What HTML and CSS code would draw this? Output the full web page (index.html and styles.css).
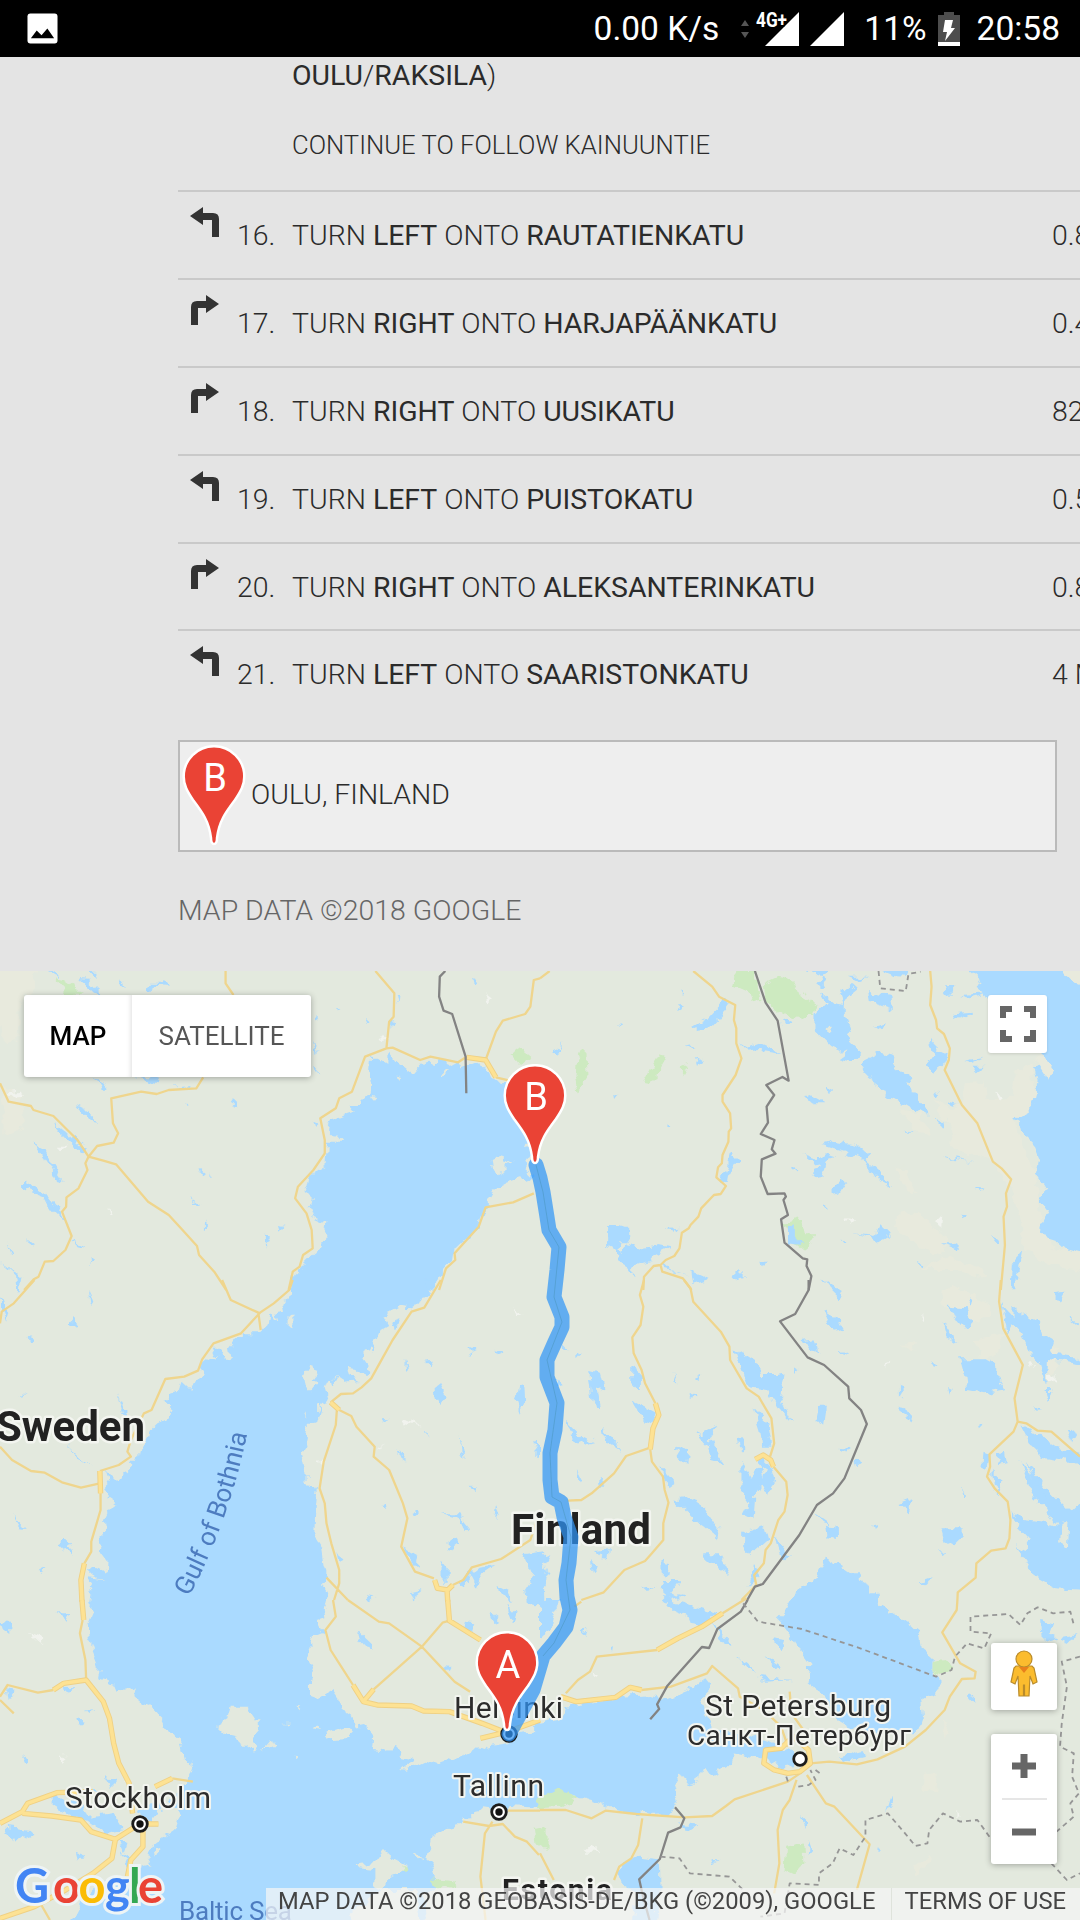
FILE: index.html
```html
<!DOCTYPE html>
<html lang="en">
<head>
<meta charset="utf-8">
<title>Directions to Oulu</title>
<link rel="stylesheet" href="styles.css">
</head>
<body>
<svg class="defs" width="0" height="0" aria-hidden="true">
  <symbol id="left" viewBox="0 0 30 30"><path d="M0 9 13 0v6h10q6 0 6 6v18h-7V13h-9v5z"/></symbol>
  <symbol id="right" viewBox="0 0 30 30"><path d="M29 9 16 0v6H7q-6 0-6 6v18h7V13h8v5z"/></symbol>
  <symbol id="pin" viewBox="-32 0 64 102"><path class="pin-body" d="M0 99C-2.500 99-3 96-3 93C-5 76-12 67-21 55C-27 46-30.300 40-30.300 31.500A30.300 30.300 0 0 1 30.300 31.500C30.300 40 27 46 21 55C12 67 5 76 3 93C3 96 2.500 99 0 99Z"/></symbol>
</svg>

<header class="status">
  <svg class="picture" viewBox="0 0 32 32"><rect x=".5" y=".5" width="31" height="31" rx="3" fill="#fff"/><path d="M4 26 10 18l5 5 6-7 7 10z"/></svg>
  <span class="speed">0.00 K/s</span>
  <svg class="updown" viewBox="0 0 8 18"><path d="M4 0 8 6H0zM4 18 0 12h8z" fill="#555"/></svg>
  <svg class="signal wide" viewBox="0 0 43 34"><path d="M43 0V34H9z" fill="#fff"/><text class="net" x="0" y="15" textLength="31" lengthAdjust="spacingAndGlyphs">4G+</text></svg>
  <svg class="signal" viewBox="0 0 34 34"><path d="M34 0V34H0z" fill="#fff"/></svg>
  <span class="percent">11%</span>
  <svg class="battery" viewBox="0 0 22 34"><path d="M0 3h6V0h10v3h6v27H0z" fill="#4d4d4d"/><path d="M0 30h22v4H0zM7 8h8l-2 8h4L7 29l2-9H5z" fill="#fff"/></svg>
  <span class="clock">20:58</span>
</header>

<main class="directions">
  <div class="continued">
    <p class="dest"><b>OULU</b>/<b>RAKSILA</b>)</p>
    <p class="follow">CONTINUE TO FOLLOW KAINUUNTIE</p>
  </div>
  <ol class="steps">
    <li><svg><use href="#left"/></svg><span>16.</span><p>TURN <b>LEFT</b> ONTO <b>RAUTATIENKATU</b></p><span>0.8 KM</span></li>
    <li><svg><use href="#right"/></svg><span>17.</span><p>TURN <b>RIGHT</b> ONTO <b>HARJAPÄÄNKATU</b></p><span>0.4 KM</span></li>
    <li><svg><use href="#right"/></svg><span>18.</span><p>TURN <b>RIGHT</b> ONTO <b>UUSIKATU</b></p><span>82 M</span></li>
    <li><svg><use href="#left"/></svg><span>19.</span><p>TURN <b>LEFT</b> ONTO <b>PUISTOKATU</b></p><span>0.5 KM</span></li>
    <li><svg><use href="#right"/></svg><span>20.</span><p>TURN <b>RIGHT</b> ONTO <b>ALEKSANTERINKATU</b></p><span>0.8 KM</span></li>
    <li><svg><use href="#left"/></svg><span>21.</span><p>TURN <b>LEFT</b> ONTO <b>SAARISTONKATU</b></p><span>4 M</span></li>
  </ol>
  <div class="arrival">
    <svg class="arrival-pin" viewBox="-32 0 64 102"><use href="#pin" x="-32" y="0" width="64" height="102"/><text class="pin-letter" x="1" y="46">B</text></svg>
    <span>OULU, FINLAND</span>
  </div>
  <p class="credit">MAP DATA ©2018 GOOGLE</p>
</main>

<section class="map">
<svg class="canvas" viewBox="0 971 1080 949">
  <defs>
    <filter id="coast" filterUnits="userSpaceOnUse" x="-20" y="950" width="1120" height="990" color-interpolation-filters="sRGB">
      <feTurbulence type="fractalNoise" baseFrequency=".11" numOctaves="2" seed="4"/>
      <feDisplacementMap in="SourceGraphic" scale="11" xChannelSelector="R" yChannelSelector="G"/>
    </filter>
  </defs>
  <rect x="0" y="960" width="1080" height="970" fill="#e3e9de"/>
  <g filter="url(#coast)">
    <!-- north west -->
    <g transform="translate(0 960) scale(.34439 .33333)">
      <path class="sand" d="M-20 20H110L90 100 60 110 50 240 20 250-20 150zM10 380l50 30 10 90-60 30z"/>
      <path class="park" d="M160 55 185 60 230 90 240 104 200 104zM1485 285 1510 265 1540 290 1510 315z"/>
      <path class="water" d="M845 1010 858 950 880 915 912 880 938 860 954 832 940 800 942 785 905 768 898 745 908 715 878 692 893 680 900 645 945 615 950 545 990 545 965 515 945 490 1010 462 1030 455 1012 432 1040 432 1070 400 1075 375 1070 345 1075 290 1092 290 1122 312 1122 270 1150 305 1175 325 1200 345 1235 305 1258 318 1285 300 1340 325 1380 308 1410 325 1430 355 1450 370 1480 365 1500 440 1540 520 1525 560 1540 590 1520 625 1545 650 1530 665 1500 655 1470 665 1430 690 1418 710 1420 740 1395 770 1390 800 1355 835 1320 870 1315 900 1285 930 1265 975 1235 1010z"/>
      <path class="water" d="M135 32 175 55 160 32zM230 60 255 62 300 104 270 98zM255 32 280 32 280 55zM345 50 360 60 368 88 355 75zM420 80 435 68 465 68 480 60 487 78 455 75 430 95zM390 352 465 352 455 370zM500 380 555 375 560 388zM220 435 250 450 285 485 260 482zM160 490 190 515 250 570 240 580 200 545 170 515zM100 550 130 565 150 610 185 665 165 660 140 610zM70 660 130 700 160 740 195 795 150 750 120 705 70 685zM0 905 30 930 65 945 60 1000 50 1000 48 950zM205 835 245 870 225 865zM260 890 270 900 262 912zM75 838 98 855 92 865zM775 825 785 845 775 858zM808 798 820 800 812 812zM575 625 592 638 582 643zM555 715 585 735 568 732zM670 435 680 420 687 442zM915 165 928 178 918 182zM975 140 988 152 982 160zM1060 172 1075 185 1068 190zM1155 100 1163 100 1160 130zM905 235 925 280 912 270zM912 320 930 340 915 335zM1370 50 1390 60 1380 70zM270 340 310 385 300 390zM535 430 545 435 540 440zM595 780 602 800 595 808zM610 640 618 658 612 655zM15 840 40 890 32 890zM910 485 925 492 915 500zM1130 180 1145 185 1135 205z"/>
      <path class="land" d="M1425 600 1445 590 1492 605 1465 608 1465 630 1445 643 1428 630zM1285 330 1298 335 1290 348zM1075 405 1090 408 1080 420zM1155 340 1170 345 1160 360z"/>
      <path class="snow" d="M1400 95 1425 115 1412 130zM20 400 55 395 60 408 30 410zM165 560 193 560 178 580zM310 735 325 770 318 770zM1100 225 1125 235 1110 240z"/>
    </g>
    <!-- north east -->
    <g transform="translate(540 960) scale(.34439 .33333)">
      <path class="sand" d="M1230 370 1290 365 1300 420 1370 410 1375 340 1430 310 1440 440 1380 480 1400 560 1440 640 1455 800 1490 860 1580 880 1580 940 1510 920 1450 900 1400 860 1400 790 1370 690 1310 600 1190 560 1200 520 1140 420 1200 450 1230 430zM1040 450 1100 460 1140 525 1100 520zM1040 760 1090 755 1180 830 1170 890 1100 860 1030 800zM1100 930 1180 890 1300 940 1290 950 1200 930zM1035 620 1060 625 1090 700 1060 690z"/>
      <path class="park" d="M570 33 625 33 640 120 612 125 605 95 560 75zM650 70 690 50 730 58 750 100 805 135 795 165 765 165 738 180 700 160 655 125zM120 265 135 280 138 350 110 395 100 350 105 300zM345 285 365 295 325 370 303 365 330 310zM405 320 430 310 415 340zM705 785 760 775 770 820 803 820 770 875 740 850z"/>
      <path class="water" d="M1235 20 1280 60 1265 85 1300 110 1310 130 1440 270 1470 300 1435 325 1445 360 1435 430 1410 458 1380 478 1400 500 1405 525 1430 550 1450 600 1440 640 1470 690 1450 720 1475 755 1450 800 1480 840 1510 850 1530 870 1590 885V20z"/>
      <path class="water" d="M797 165 830 130 812 97 850 130 880 135 870 105 905 75 920 90 885 120 885 170 900 210 895 240 930 275 905 305 870 295 890 280 840 255 797 210zM950 95 1020 110 1025 150 985 135 955 125zM770 28 850 28 820 48zM900 50 950 50 925 62zM805 75 820 52 832 78zM925 310 990 275 1030 285 1025 315 1070 350 1080 395 1120 440 1125 470 1060 430 1010 415 990 380 950 350zM440 205 490 175 540 120 555 125 520 170 495 200 450 210zM577 250 600 265 640 250 705 280 640 270 600 275zM770 415 785 405 830 430 790 430zM820 555 850 545 930 560 960 585 945 600 1000 650 1020 680 970 650 940 600 920 590 880 575 835 560zM765 585 810 600 830 580 860 590 830 600 820 645 785 650 790 630 815 625zM195 795 225 795 240 800 262 800 262 835 250 855 300 865 345 855 380 862 335 885 320 905 270 920 272 945 255 920 230 905 225 870 195 855zM355 905 380 930 430 945 365 930zM440 935 490 960 445 975zM560 945 575 930 595 950 570 958zM555 580 575 600 550 640 545 670 520 655 540 640zM720 800 740 790 740 830 765 855 720 850zM910 820 970 828 985 790 1020 825 980 848 960 832zM1130 235 1160 270 1178 280 1175 310 1140 335 1120 300 1150 290 1140 270zM1195 160 1255 155 1230 170 1200 180zM1170 82 1210 80 1185 105zM1220 105 1300 100 1250 115zM985 28 1070 28 1060 50 1030 48zM1235 300 1285 290 1255 305zM1250 320 1295 320 1265 340zM1170 850 1205 850 1215 870zM1145 475 1180 495 1165 500zM1175 425 1215 435 1200 440zM1145 392 1165 400 1150 412zM1170 590 1260 605 1200 600zM1400 870 1380 985 1367 985 1370 910zM1265 685 1290 680 1280 692zM1215 760 1240 768 1225 775zM1310 825 1340 840 1330 852zM845 690 880 655 885 670 865 705zM735 620 748 630 738 640zM450 290 470 305 460 325zM420 260 445 255 440 265zM370 490 382 498 370 505zM215 405 225 410 218 420zM640 905 652 905 645 925zM400 135 415 145 405 150zM410 88 420 95 415 102zM225 192 232 195 228 205zM970 200 1010 190 1000 212zM700 178 730 190 705 200zM825 735 835 740 832 750zM1095 905 1110 912 1105 925zM865 830 890 850 880 850zM370 805 405 800 395 812zM1060 505 1085 515 1070 515zM830 382 850 392 835 392zM40 270 65 250 45 285z"/>
      <path class="land" d="M835 200 850 200 848 215 838 212zM230 850 250 850 240 875 228 870z"/>
      <path class="sand" d="M1505 20 1590 20V80L1540 60zM1435 290 1460 285 1490 330 1475 360 1450 320z"/>
      <path class="snow" d="M1325 398 1350 408 1335 422zM1150 790 1168 770 1165 800zM885 775 915 780 900 795z"/>
    </g>
    <!-- west -->
    <g transform="translate(0 1280) scale(.34439 .33333)">
      <path class="water" d="M850-20 845 35 820 75 825 95 800 100 805 130 785 100 780 135 755 160 710 160 705 175 680 185 665 205 670 235 650 240 640 220 628 242 600 232 590 240 588 275 570 300 555 330 530 305 525 320 490 345 475 365 500 375 490 400 480 420 460 430 435 455 430 475 410 505 400 520 395 545 375 545 375 575 355 580 345 605 325 585 305 580 315 610 300 625 310 650 338 670 318 685 305 715 308 755 292 765 295 800 290 810 315 845 313 875 270 855 255 870 275 890 300 900 262 895 255 920 270 945 262 985H950L940 970 950 940 938 915 950 890 942 850 935 800 910 760 912 700 920 620 890 615 890 580 882 540 877 520 890 500 885 480 895 435 920 430 935 375 955 370 943 325 950 305 975 288 1000 305 1050 300 1030 270 1060 285 1078 275 1052 235 1070 195 1080 215 1105 150 1130 135 1115 105 1160 80 1190 85 1230 60 1240 10 1237-20z"/>
      <path class="water" d="M50-10 62-10 58 35 50 25zM0 50 18 100 12 125 0 90zM260 30 275 75 265 70zM200 130 215 110 225 140zM80 170 98 178 85 185zM340 345 365 400 355 395zM195 495 265 560 230 535zM165 790 190 775 210 795 195 800 212 830 180 805zM35 705 75 750 60 748zM110 860 132 868 120 875zM1145 120 1160 115 1150 150 1138 140zM1262 325 1278 312 1298 350 1275 378 1265 355zM1508 320 1520 325 1522 370 1512 395 1500 360zM1435 200 1470 212 1450 222zM1360 205 1375 212 1368 225zM1235 245 1260 242 1250 262zM1180 240 1188 260 1182 278zM1150 500 1180 545 1165 535zM1335 470 1350 535 1340 520zM1545 510 1568 480 1568 535zM1170 805 1215 830 1210 860 1195 845zM1275 840 1300 870 1300 905 1285 905 1285 870zM1340 900 1390 860 1435 855 1400 880 1385 920 1370 890 1345 920zM1295 800 1330 775 1335 785 1300 812zM1280 700 1340 700 1345 720 1365 745 1350 760 1335 715zM1440 680 1450 705 1435 715zM1520 820 1580 810 1580 980 1530 970 1525 930 1550 890zM1445 915 1475 930 1490 970 1450 940zM1065 945 1090 950 1075 958zM1190 940 1230 930 1200 955zM980 820 1005 840 985 845zM1200 690 1220 690 1205 702zM1110 670 1120 675 1113 685zM1370 620 1385 622 1375 630zM1235 445 1250 468 1240 460zM1110 415 1135 414 1115 422zM60 342 78 345 65 350z"/>
      <path class="land" d="M880 290 900 260 925 270 905 300 930 310 905 340 885 320zM838 110 852 110 852 145 838 140zM1010 265 1035 270 1050 300 1015 290zM885 395 890 395 892 412zM920 375 930 380 922 402z"/>
      <path class="water" d="M615 200 635 200 645 225 628 235zM960 295 980 290 965 318z"/>
      <path class="snow" d="M1165 415 1185 420 1225 440 1190 430 1175 440zM920 540 935 530 930 560zM1095 510 1115 490 1105 505zM1485 85 1520 105 1500 105z"/>
    </g>
    <!-- east -->
    <g transform="translate(540 1280) scale(.34439 .33333)">
      <path class="sand" d="M1170 30 1200 15 1240 40 1310 75 1300 110 1250 130 1240 90 1165 80zM1255 175 1350 160 1330 220 1290 240zM1045 195 1095 190 1085 215zM1470 190 1510 205 1490 290 1460 260z"/>
      <path class="water" d="M1370 690 1400 720 1470 730 1500 740 1450 640 1410 545 1480 640 1540 700 1568 670 1590 670V930L1500 925 1440 890 1380 795 1410 810 1425 780 1390 740zM1395 430 1440 460 1500 500 1590 530V570L1520 540 1460 530 1430 500zM1375 80 1430 120 1450 130 1460 165 1490 185 1480 220 1560 230 1590 255 1520 245 1475 240 1470 320 1450 250 1420 215 1400 170 1375 130zM1220 235 1300 235 1325 250 1320 280 1350 328 1290 340 1240 330 1235 290zM1190 80 1235 85 1250 130 1240 150 1215 120 1190 105zM1160 745 1230 745 1230 770 1200 798 1170 780z"/>
      <path class="water" d="M565 205 630 250 640 285 690 285 710 280 700 350 733 430 700 395 670 350 660 330 600 320 590 280zM620 385 660 430 672 500 645 500 640 450zM585 545 610 590 635 560 640 530 670 560 680 600 665 640 640 620 625 650 620 715 590 700 605 670 585 640zM590 755 650 740 660 780 610 825 590 800zM680 765 725 830 700 840zM390 660 430 650 475 680 520 750 515 775 480 745 440 710zM825 85 860 110 880 150 845 155 835 120zM765 180 800 175 808 215 785 210zM810 380 833 380 825 438 800 425zM830 735 865 740 865 780 835 775zM460 465 515 440 490 480 535 550 500 540 490 500zM395 500 430 510 425 555 410 540zM140 270 180 280 190 320 165 330 175 390 150 370zM75 425 120 470 160 490 135 495 90 470zM180 440 235 510 190 480zM265 255 290 270 290 330 265 300zM265 360 340 400 325 430 300 420zM355 560 395 605 370 625zM1285 515 1305 520 1300 570 1282 560zM1325 520 1350 515 1355 550 1330 555zM1035 380 1060 385 1085 425 1050 405zM480 820 520 820 555 890 530 870 500 850 480 845zM160 810 200 805 195 850zM738 985 740 930 790 905 830 830 870 855 905 880 925 880 955 940 975 985zM820-5 850 20 880 30 870 55 845 30zM1170 120 1215 195 1185 175zM1240 55 1255 60 1250 80zM1490 40 1525 35 1510 65zM1530 110 1570 130 1560 138zM1340 75 1380 120 1360 160zM1045 320 1060 325 1045 350zM1185 315 1195 320 1190 350zM1465 330 1485 330 1475 365zM1100 905 1140 890 1125 910zM1150 810 1180 820 1165 828zM965 735 978 745 970 752zM1225 630 1240 640 1232 650zM1395 540 1450 620 1480 690 1430 650zM1310 570 1340 600 1335 640 1315 620zM1045 670 1080 655 1070 700zM570 475 590 480 590 515 575 500zM110 215 122 222 112 235zM385 275 405 310 395 310zM430 340 455 350 440 360zM145 840 165 860 150 878zM350 845 375 850 370 880 350 880zM355 900 410 900 380 940 420 950 360 960zM300 920 335 915 310 930zM0 830 30 820 10 860 25 900 0 950zM110 570 125 600 115 610zM170 590 190 620 175 620zM45 290 70 320 55 325zM60 190 80 210 65 210zM800 700 850 735 820 725zM875 500 905 505 890 520zM910 540 930 550 915 565zM1430 375 1450 390 1440 392zM1535 445 1555 460 1545 478zM1270 425 1285 432 1275 440zM620 850 645 890 600 920zM730 262 745 270 735 278zM450 290 462 285 460 305zM1140 240 1148 265 1135 260zM875 205 895 220 882 225z"/>
      <path class="land" d="M1515 725 1535 720 1530 800 1510 790zM640 560 655 570 650 590z"/>
      <path class="snow" d="M1475 290 1500 280 1500 300 1475 310zM1000 250 1015 245 1005 258zM1105 95 1112 125 1105 125zM1420 245 1435 255 1425 265z"/>
    </g>
    <!-- south west -->
    <g transform="translate(0 1600) scale(.34439 .33333)">
      <path class="water" d="M265-20 262 10 272 35 255 75 258 115 270 150 290 205 285 235 330 248 335 275 390 262 400 300 430 312 460 345 480 365 470 385 505 400 525 430 540 485 560 495 550 525 530 560 490 600 520 640 505 690 470 715 450 730 425 765 440 790 400 800 370 830 300 850 240 900 190 1000H1240L1230 880 1260 870 1270 850 1245 810 1260 785 1240 765 1250 740 1255 710 1290 690 1345 675 1340 655 1380 650 1400 625 1470 635 1480 615 1590 622V390L1500 400 1475 430 1410 440 1400 455 1375 450 1320 480 1300 475 1260 490 1235 485 1180 512 1165 510 1200 480 1160 470 1170 450 1145 440 1130 455 1080 450 1085 400 1060 375 1035 380 1020 350 990 330 985 300 965 270 925 295 900 285 900 240 915 215 890 170 905 140 900 110 935 95 920 60 945 50 940 30 950-20z"/>
      <path class="water" d="M0 60 30 70 30 105 10 90zM15 680 90 690 100 705 50 725 20 705zM150 590 230 610 260 650 330 640 360 690 300 700 250 660 200 650 150 610zM1045 95 1080 130 1075 160 1050 125zM170 40 205 40 195 60zM20 265 45 270 25 300zM185 260 220 262 190 280zM230 355 245 360 235 375zM250 335 270 330 260 345zM65 465 85 480 78 495zM305 535 340 540 320 560zM220 755 255 770 225 775zM340 720 370 730 360 760zM350 760 380 780 370 800zM1350 65 1380 70 1370 95 1345 85zM1290 195 1305 198 1300 208zM1420 40 1450 60 1430 70zM1470 10 1500 40 1490 70zM1530-10 1580-10V40zM450 610 470 620 440 660 400 640 410 620zM270 575 300 580 290 600z"/>
      <path class="land" d="M628 375 660 355 670 320 715 320 740 340 735 370 760 370 735 400 750 440 740 460 700 430 690 410 650 400zM760 455 790 420 798 440zM940 405 1000 385 1030 395 1010 415 950 418zM905 385 920 372 935 390zM1030 795 1090 785 1115 750 1130 765 1175 790 1170 815 1130 830 1110 870 1090 860 1090 810 1045 805zM1195 765 1235 770 1215 782zM1010 940 1060 910 1090 870 1210 870 1220 1000 1020 1000zM820 368 838 368 835 376zM845 470 865 472 855 480zM860 320 875 322 868 328zM445 745 465 740 450 770z"/>
      <path class="park" d="M1248 835 1325 845 1310 865 1265 865zM1165 790 1185 805 1170 820zM1550 690 1590 680V750L1555 730z"/>
      <path class="snow" d="M80 95 125 112 125 135 100 112zM180 460 190 470 180 498zM360 540 375 530 375 550z"/>
    </g>
    <!-- south east -->
    <g transform="translate(540 1600) scale(.34439 .33333)">
      <path class="water" d="M-20 375 30 360 60 355 75 320 150 310 200 300 240 290 330 285 370 300 420 280 480 235 500 260 470 290 480 340 520 400 600 400 660 420 700 440 735 455 735 495 700 500 655 480 560 460 550 500 500 525 470 505 455 560 430 550 410 525 390 560 400 600 380 640 320 645 220 630 150 600 60 575 -20 620z"/>
      <path class="water" d="M740-20 710 40 690 60 735 120 785 190 780 250 830 290 850 350 900 380 940 395 1050 400 1100 395 1115 350 1110 300 1160 270 1160 235 1140 220 1140 170 1105 140 1100 95 1040 50 980 10 975-20zM870 470 940 450 945 475 900 487zM225 820 240 790 290 770 348 778 350 870 330 1000H270L280 880 235 850z"/>
      <path class="water" d="M350-10 420 10 480 30 510 40 470 80 440 75 430 50 390 35zM500 65 530 100 560 140 530 120zM680 115 715 120 705 150 690 140zM570 170 600 190 630 215 600 205zM630 230 700 240 740 240 650 245zM655 165 690 190 700 215 680 200zM0 0 60 0 40 40 30 90 0 110zM1455 60 1490 70 1480 100 1500 110 1460 120zM1510 115 1560 105 1530 125zM1020 590 1025 610 1005 640zM780 720 790 750 778 765zM755 645 775 670 770 690zM400 670 460 678 430 690zM500 775 515 785 505 790zM980 740 990 735 980 760zM1245 295 1265 290 1255 305zM205 145 215 140 212 158zM120 90 135 80 130 105z"/>
      <path class="park" d="M1140 185 1180 180 1195 205 1160 225 1140 215zM715 740 765 730 768 790 740 825 710 810zM-10 600 50 568 110 590 60 620-10 625zM-10 690 20 690 10 720-10 720z"/>
      <path class="sand" d="M1115 520 1155 525 1150 580 1110 570zM1080 800 1135 765 1130 790 1090 830zM1170 370 1185 380 1175 420z"/>
      <path class="snow" d="M130 755 150 735 173 755zM1215 630 1225 640 1215 655zM145 215 175 220 160 228z"/>
    </g>
  </g>

  <g transform="translate(0 960) scale(.34439 .33333)">
    <path class="road" d="M655 33V70L678 105M590 352 570 385 490 390 455 402 410 395 323 415 328 490 343 520 330 548 282 558 257 590 225 540 155 468 97 450 90 438 25 425 0 370M257 590 300 602 337 613 430 725 490 765 530 810 572 858 578 885 622 935 657 990M257 590 248 610 254 630 228 685 193 712 192 740 180 755 208 828 190 870 155 903 130 905 112 950 98 958 70 990M1090 33 1145 100 1143 170 1130 185 1122 265 1140 263 1220 300 1250 290 1330 307 1355 290M1440 352 1480 362M1122 265 1060 290 1022 395 985 415 975 445 930 475 943 540 943 580 910 630 865 680 857 715 890 760 905 810 908 865 880 885 870 920 850 935 838 990M1568 55 1550 60 1540 140 1525 162 1460 182 1440 215 1410 300M1550 700 1490 727 1410 742 1390 800 1320 880 1322 900 1295 925 1275 990"/>
    <path class="motor-edge" d="M1355 292 1410 300 1440 352"/><path class="motor" d="M1355 292 1410 300 1440 352"/>
    <path class="border" d="M1293 33 1277 50 1275 110 1288 152 1313 162 1352 290 1354 400"/>
  </g>
  <g transform="translate(540 960) scale(.34439 .33333)">
    <path class="road" d="M0 55 28 33M445 33 500 80 520 110 567 135 563 180 570 205 570 250 585 295 568 345 530 405 530 425 552 460 555 505 548 515 547 545 530 585 528 610 517 622 512 652 540 678 525 702 505 705 468 745 460 770 437 795 432 805 412 818 405 865 390 888 365 900 350 915 330 918 302 950 300 990M350 915 355 935 415 955 440 990M1133 33 1137 80 1133 135 1150 180 1153 205 1173 222 1190 265 1187 300 1175 330 1225 435 1270 490 1315 605 1340 625 1368 658 1353 700 1356 740 1346 770 1350 855 1338 990"/>
    <path class="border" d="M624 33 655 128 690 182 722 362 704 351 657 375 680 405 658 440 662 488 641 522 681 540 673 568 684 581 644 598 641 650 661 702 710 700 714 710 707 720 720 765 700 778 710 848 763 895 776 898 774 918 788 948 780 990"/>
    <path class="region" d="M983 33 988 85 1062 93 1070 42 1105 35"/>
  </g>
  <g transform="translate(0 1280) scale(.34439 .33333)">
    <path class="road" d="M850 0 840 30 795 70 755 98 700 160 620 190 587 238 575 272 535 290 480 297 440 390 418 400 380 480 370 515 380 530 345 555 290 573M292 640V690L265 785V815L245 850M645 0 670 60 750 98 757 150M0 500 35 540 90 573 130 578 180 607 235 623 290 610M100 0 40 70 5 95 0 130M1280 0 1232 83 1195 95 1140 180 1105 245 1078 295 1050 322 1025 340 990 342 960 367M978 392 975 435 940 545 928 625 943 670 948 730 962 790 985 870V910L970 960M948 893 1010 960M985 390 1020 408 1035 440 1088 500 1085 530 1130 570 1170 670 1183 715 1165 800 1205 875 1260 895M1315 915 1345 900 1370 862 1455 837 1540 780 1568 690"/>
    <path class="motor-edge" d="M290 573 292 640M245 850 235 900 238 965M960 367 985 390M1262 900 1270 925 1300 930 1315 915M1298 930 1300 965"/><path class="motor" d="M290 573 292 640M245 850 235 900 238 965M960 367 985 390M1262 900 1270 925 1300 930 1315 915M1298 930 1300 965"/>
  </g>
  <g transform="translate(540 1280) scale(.34439 .33333)">
    <path class="road" d="M302 0 290 45 300 80 292 135 268 172 272 220 295 270 305 310 335 370M320 508 325 545 357 590 362 630 373 668 358 730V780L325 820 305 843 245 870 185 937 120 960M320 503 250 528 215 580 150 640 120 660 80 662M418 0 437 25 445 65 525 155 550 200 552 240 600 325 635 350 672 415 680 490 668 530M678 560 715 605 719 645 710 695 692 720 670 790 655 810 650 850 622 885 628 915 585 960M1338 0 1333 65 1345 145 1402 255 1378 355 1387 425 1375 455 1305 523 1307 560 1298 590 1320 625 1358 665 1366 720 1363 775 1352 805 1310 812 1267 850 1265 893 1213 937 1212 960M1387 425 1412 430 1445 452 1485 455 1568 530"/>
    <path class="motor-edge" d="M335 370 345 405 328 445 320 508M625 538 648 525 670 540 678 560"/><path class="motor" d="M335 370 345 405 328 445 320 508M625 538 648 525 670 540 678 560"/>
    <path class="border" d="M780 0V30L741 102 697 124 777 232 825 255 895 320 898 355 932 390 949 432 884 595 851 640 804 675 753 765 647 912 624 920 600 963"/>
  </g>
  <g transform="translate(0 1600) scale(.34439 .33333)">
    <path class="road" d="M240 60 232 100 248 180 250 235M0 290 22 255 110 278 155 270M0 300 40 340M500 535 560 545M967 0 975 50 945 90 960 150 1025 255M1085 268 1225 140 1285 68 1305 62M1010 0 1100 65 1130 70 1225 140 1320 245 1365 275M1345 665 1420 678 1460 672 1495 710 1530 725 1565 765M1430 665 1408 700 1395 830 1410 960M1475 632H1568M120 915 145 960"/>
    <path class="motor-edge" d="M238 0 243 60M155 270 185 250 250 240 300 305 318 355 330 430 345 490 375 550 385 640M0 670 65 635 80 610 165 578 270 575M65 640 150 648 235 660 265 695 335 718 405 672 460 672M335 718 325 775 270 820 190 870 100 920 0 955M415 690V740L380 780 370 830M450 560 500 535M1025 255 1055 305 1095 315 1195 318 1230 333 1305 335 1400 370 1475 400M1055 305 1085 268M1300 0 1305 62 1395 120M1395 415 1475 395 1568 360"/>
    <path class="motor" d="M238 0 243 60M155 270 185 250 250 240 300 305 318 355 330 430 345 490 375 550 385 640M0 670 65 635 80 610 165 578 270 575M65 640 150 648 235 660 265 695 335 718 405 672 460 672M335 718 325 775 270 820 190 870 100 920 0 955M415 690V740L380 780 370 830M450 560 500 535M1025 255 1055 305 1095 315 1195 318 1230 333 1305 335 1400 370 1475 400M1055 305 1085 268M1300 0 1305 62 1395 120M1395 415 1475 395 1568 360"/>
  </g>
  <g transform="translate(540 1600) scale(.34439 .33333)">
    <path class="road" d="M75 280 110 240 145 215 165 170 340 150M530 40 600-5M295 270 380 260 485 220 500 198 575 265 580 290 650 330 700 380 720 440M1212 0 1210 30 1168 97 1220 190 1265 215 1262 235 1225 237 1190 290 1175 330 1120 390 1060 440 980 478 920 493 840 485 785 490M755 520 720 545 565 598 540 618 500 648 420 652 280 642 190 632 150 655 75 630 0 630M297 655 285 735 265 775 230 800 215 840M745 540 725 600 705 630 690 690 695 790 680 880M775 525 830 610 855 620 957 733 920 870M725 275 730 340 765 390M0 760 40 840M120 5 100 20"/>
    <path class="motor-edge" d="M340 150 400 115 470 80 530 40M60 290 105 305 220 292 262 262 295 270M650 490 655 450 700 445 735 410 780 450 785 490 755 515 720 520 680 510z"/><path class="motor" d="M340 150 400 115 470 80 530 40M60 290 105 305 220 292 262 262 295 270M650 490 655 450 700 445 735 410 780 450 785 490 755 515 720 520 680 510z"/>
    <path class="border" d="M603 0 583 35 515 87 491 144 470 141 370 257 340 313 346 327 320 358M392 622 419 655 408 682 372 698 348 777 288 838 297 880 318 960"/>
    <path class="region" d="M590 10 633 65 760 87 930 145 1150 230 1195 210 1205 170 1240 130 1290 145 1310 100 1250 95 1250 50 1360 42 1395 75 1415 40 1445 22 1490 40 1540 35 1550 75M1568 170 1515 185 1530 260 1515 370 1510 440 1550 460 1545 530 1565 580 1540 610 1550 650 1500 695M1305 710 1270 660 1220 665 1170 640 1130 690 1125 730 1090 738 1060 700 1010 640 945 660V710L910 765 870 745 850 790 810 820V855L725 850 710 940 640 950M350 770 405 775 435 820 550 830 590 870M1485 790 1530 840 1568 820M715 530 720 545M750 560 780 555 800 540 785 510M800 510 820 525"/>
  </g>

  <g class="towns">
    <circle cx="140" cy="1824" r="7.300"/><circle class="dot" cx="140" cy="1824" r="3.700"/>
    <circle cx="499" cy="1812" r="7.300"/><circle class="dot" cx="499" cy="1812" r="3.700"/>
    <circle cx="509" cy="1734" r="7.300"/><circle class="dot" cx="509" cy="1734" r="3.700"/>
    <circle cx="800" cy="1759" r="6.300"/>
  </g>
  <g class="country">
    <text x="-4" y="1441" textLength="149">Sweden</text>
    <text x="511" y="1544" textLength="140">Finland</text>
    <text class="small" x="502" y="1900" textLength="110">Estonia</text>
  </g>
  <g class="city">
    <text x="65" y="1808" textLength="146">Stockholm</text>
    <text x="453" y="1796" textLength="91">Tallinn</text>
    <text x="454" y="1718" textLength="109">Helsinki</text>
    <text x="705" y="1716" textLength="186">St Petersburg</text>
    <text class="local" x="687" y="1745" textLength="224">Санкт-Петербург</text>
  </g>
  <path id="bothnia" d="M189 1597Q230 1520 248 1430" fill="none"/>
  <text class="sea"><textPath href="#bothnia" textLength="174">Gulf of Bothnia</textPath></text>
  <text class="sea" x="179" y="1920" textLength="113">Baltic Sea</text>

  <path class="route" d="M536 1165 540 1178 543 1192 547 1217 549 1230 559 1247 557 1270 554 1297 562 1317 562 1327 555 1342 547 1360 547 1377 557 1403 555 1430 550 1453 550 1480 552 1497 561 1502 564 1517 571 1537 569 1563 566 1580 567 1597 570 1610 566 1627 554 1643 543 1656 533 1690 509 1734"/>
  <path class="route-line" d="M536 1165 543 1192 549 1230 559 1247 554 1297 562 1322 547 1360 557 1403 550 1453 552 1497 561 1502 571 1537 566 1580 570 1610 554 1643 543 1656"/>

  <use href="#pin" x="503" y="1064" width="64" height="102"/><text class="pin-letter" x="536" y="1110">B</text>
  <use href="#pin" x="475" y="1631" width="64" height="102"/><text class="pin-letter" x="508" y="1678">A</text>
  <text class="brand" y="1903"><tspan x="15" fill="#4285f4">G</tspan><tspan x="53" fill="#ea4335">o</tspan><tspan x="78.500" fill="#fbbc05">o</tspan><tspan x="105" fill="#4285f4">g</tspan><tspan x="129" fill="#34a853">l</tspan><tspan x="138" fill="#ea4335">e</tspan></text>
</svg>

  <div class="types"><span class="active">MAP</span><span>SATELLITE</span></div>
  <div class="full"><svg viewBox="0 0 36 36"><path d="M12 3H3v9M24 3h9v9M12 33H3v-9M24 33h9v-9" fill="none" stroke="#666" stroke-width="6"/></svg></div>
  <div class="side">
    <div class="pegman"><svg viewBox="0 0 28 48"><g fill="#fbbc2e" stroke="#b98b2b" stroke-width="1.200"><path d="M6 16h16l2 2 3 14-4 2-3-8-1 20h-4.500V35h-1V46H9L8 26 5 34 1 32 4 18z"/><circle cx="14" cy="9" r="8"/></g><path d="M9 17h10l-5 6z" fill="#e8801c"/></svg></div>
    <div class="zoom"><svg viewBox="0 0 24 24"><path d="M0 8.500h8.500V0h7v8.500H24v7h-8.500V24h-7v-8.500H0z"/></svg><hr><svg viewBox="0 0 24 24"><path d="M0 8.500h24v7H0z"/></svg></div>
  </div>
  <footer class="legal"><span class="data">MAP DATA ©2018 GEOBASIS-DE/BKG (©2009), GOOGLE</span><span class="terms">TERMS OF USE</span></footer>
</section>
</body>
</html>
```
FILE: styles.css
```css
* { box-sizing: border-box; }
body {
  margin: 0;
  width: 1080px;
  height: 1920px;
  overflow: hidden;
  display: flex;
  flex-direction: column;
  background: #e4e4e4;
  color: #2b2b2b;
  font-family: Roboto, "Noto Sans", sans-serif;
  font-weight: 300;
  font-size: 28.450px;
}
p, ol { margin: 0; padding: 0; }
b { font-weight: 400; }
.defs { position: absolute; }

/* status bar */
.status {
  height: 57px;
  flex: none;
  display: flex;
  align-items: center;
  padding: 0 20px 0 27px;
  background: #000;
  color: #fff;
  font-size: 33.500px;
  font-weight: 400;
  white-space: nowrap;
}
.picture { width: 31px; height: 31px; }
.speed { margin-left: auto; }
.updown { width: 8px; height: 18px; margin-left: 22px; }
.signal { width: 34px; height: 34px; margin-left: 11px; }
.signal.wide { width: 43px; margin-left: 7px; overflow: visible; }
.net { font-size: 20px; font-weight: 700; fill: #fff; stroke: #000; stroke-width: 3px; paint-order: stroke; }
.percent { margin-left: 20px; }
.battery { width: 22px; height: 34px; margin: 0 17px 0 11px; }

/* directions list */
.directions { height: 914px; flex: none; padding-left: 178px; overflow: hidden; }
.continued { height: 133px; padding-left: 114px; }
.dest { padding-top: 2px; line-height: 34px; }
.follow { padding-top: 35px; line-height: 34px; font-size: 25.650px; }
.steps { list-style: none; width: 960px; }
.steps li {
  display: grid;
  grid-template-columns: 59px 55px 760px 1fr;
  height: 87.900px;
  border-top: 2px solid #c9c9c9;
  line-height: 87px;
  white-space: nowrap;
}
.steps svg { width: 30px; height: 30px; margin: 15px 0 0 12px; fill: #333; }
.arrival {
  display: flex;
  align-items: center;
  width: 879px;
  height: 112px;
  margin-top: 23px;
  padding-left: 2px;
  border: 2px solid #bababa;
  background: #eee;
}
.arrival span { padding-bottom: 3px; }
.arrival-pin { width: 64px; height: 102px; margin-right: 5px; }
.pin-body { fill: #ea4335; stroke: #fff; stroke-width: 2.500px; }
.pin-letter { font-size: 38px; font-weight: 400; fill: #fff; text-anchor: middle; }
.credit { margin-top: 42px; line-height: 34px; color: #666; }

/* map */
.map { position: relative; flex: 1; overflow: hidden; }
.canvas { display: block; width: 1080px; height: 949px; }
.canvas path { vector-effect: non-scaling-stroke; }
.land { fill: #e3e9de; }
.water { fill: #aadaff; }
.park { fill: #cdeac0; }
.sand { fill: #e8eadd; }
.snow { fill: #f1f3ee; }
.road, .motor, .motor-edge, .border, .region, .route, .route-line { fill: none; stroke-linejoin: round; }
.road { stroke: #efd58d; stroke-width: 2.300px; }
.motor-edge { stroke: #efd084; stroke-width: 5.400px; }
.motor { stroke: #fde293; stroke-width: 3.600px; }
.border { stroke: #838383; stroke-width: 2.300px; }
.region { stroke: #969696; stroke-width: 1.800px; stroke-dasharray: 5 4; }
.route { stroke: #3096f7; stroke-opacity: .72; stroke-width: 15px; stroke-linecap: round; }
.route-line { stroke: #4f9bc9; stroke-width: 1px; opacity: .7; }
.towns circle { fill: #fff; stroke: #1c1c1c; stroke-width: 2.800px; }
.towns .dot { fill: #111; stroke: none; }
.country text, .city text { stroke: #f3f5f0; paint-order: stroke; stroke-linejoin: round; }
.country text { font-size: 42px; font-weight: 700; fill: #222; stroke-width: 5px; }
.country .small { font-size: 30px; }
.city text { font-size: 30px; font-weight: 400; fill: #2c2c2c; stroke-width: 4px; }
.city .local { font-size: 28px; }
.sea { font-size: 26px; font-weight: 400; fill: #4d7cc0; }
.brand { font-family: Lato, sans-serif; font-size: 47px; font-weight: 700; stroke: #eef4f5; stroke-width: 6px; paint-order: stroke; }

/* map controls */
.types, .full, .pegman, .zoom {
  background: #fff;
  border-radius: 3px;
  box-shadow: 0 1px 6px rgba(0, 0, 0, .3);
}
.types {
  position: absolute;
  left: 24px;
  top: 24px;
  width: 287px;
  height: 82px;
  display: grid;
  grid-template-columns: 108px 1fr;
  line-height: 82px;
  text-align: center;
  font-size: 26px;
  font-weight: 400;
  color: #565656;
}
.types .active { color: #000; font-weight: 500; box-shadow: inset -4px 0 5px -3px rgba(0, 0, 0, .13); }
.full { position: absolute; left: 988px; top: 24px; width: 59px; height: 58px; display: grid; place-items: center; box-shadow: 0 1px 3px rgba(0, 0, 0, .12); }
.full svg { width: 36px; height: 36px; }
.side { position: absolute; left: 991px; top: 672px; width: 66px; display: grid; gap: 24px; }
.pegman { height: 67px; display: grid; place-items: center; }
.pegman svg { width: 28px; height: 48px; margin-bottom: 5px; }
.zoom { height: 130px; display: grid; grid-template-rows: 64px 2px 64px; justify-items: center; align-items: center; }
.zoom svg { width: 24px; height: 24px; fill: #666; }
.zoom hr { width: 45px; height: 2px; margin: 0; border: 0; background: #e6e6e6; }
.legal {
  position: absolute;
  right: 0;
  bottom: 0;
  width: 814px;
  height: 32px;
  display: flex;
  justify-content: space-between;
  padding: 0 14px 0 12px;
  background: rgba(245, 245, 245, .72);
  font-size: 23.750px;
  font-weight: 400;
  line-height: 27px;
  color: #444;
  white-space: nowrap;
}
.terms { border-left: 1px solid #dfe3dc; padding-left: 13px; }
```
